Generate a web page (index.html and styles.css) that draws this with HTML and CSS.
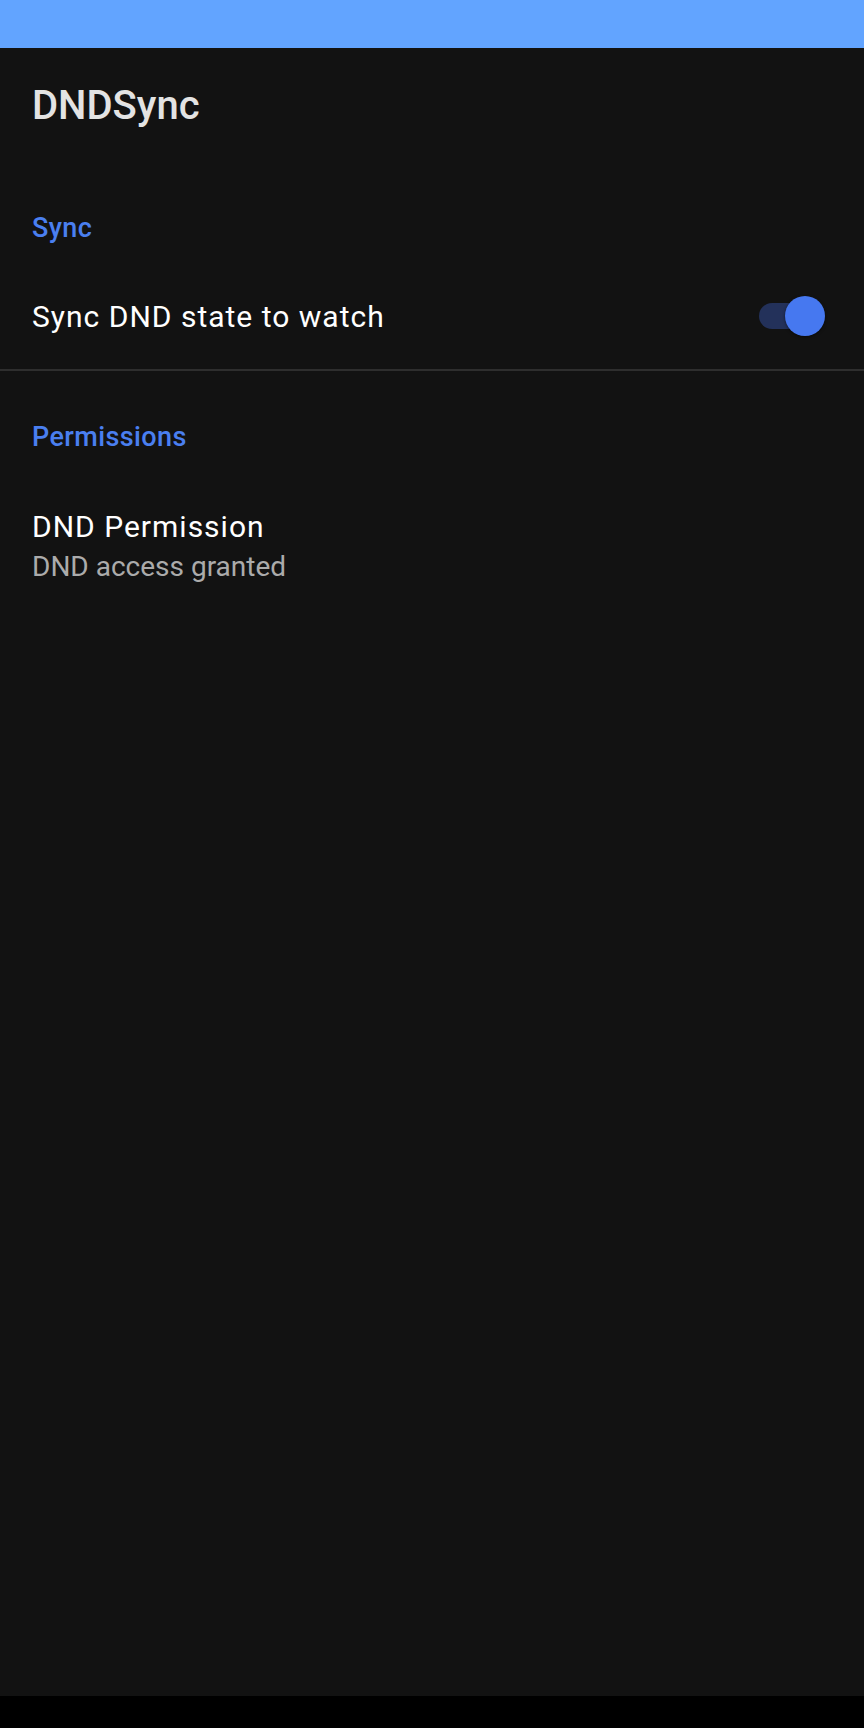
FILE: index.html
```html
<!DOCTYPE html>
<html>
<head>
<meta charset="utf-8">
<link rel="stylesheet" href="styles.css">
</head>
<body>
<div class="screen">
  <div class="statusbar"></div>
  <header class="toolbar">DNDSync</header>
  <main class="content">
    <section class="group">
      <div class="category">Sync</div>
      <div class="pref pref-switch">
        <div class="pref-title">Sync DND state to watch</div>
        <div class="switch on"><span class="track"></span><span class="thumb"></span></div>
      </div>
    </section>
    <div class="divider"></div>
    <section class="group">
      <div class="category category-2">Permissions</div>
      <div class="pref pref-text">
        <div class="pref-title">DND Permission</div>
        <div class="pref-summary">DND access granted</div>
      </div>
    </section>
  </main>
  <div class="navbar"></div>
</div>
</body>
</html>
```

FILE: styles.css
```css
html, body {
  margin: 0;
  padding: 0;
  background: #121212;
}
.screen {
  width: 864px;
  height: 1728px;
  display: flex;
  flex-direction: column;
  font-family: Roboto, "Noto Sans", sans-serif;
  background: #121212;
}
.statusbar {
  height: 48px;
  background: #62a4ff;
  flex: none;
}
.toolbar {
  height: 108px;
  padding-top: 4px;
  line-height: 108px;
  padding-left: 32px;
  font-size: 40px;
  font-weight: 500;
  color: #e3e3e3;
  flex: none;
}
.content {
  flex: 1;
}
.category {
  padding: 48px 32px 0;
  font-size: 27px;
  line-height: 40px;
  font-weight: 500;
  letter-spacing: 0.4px;
  color: #4a7ff0;
}
.category-2 {
  padding-top: 46px;
}
.pref {
  padding: 0 32px;
}
.pref-switch {
  margin-top: 14px;
  height: 107px;
  display: flex;
  align-items: center;
  justify-content: space-between;
}
.pref-switch .pref-title {
  padding-top: 3px;
}
.pref-title {
  font-size: 30px;
  line-height: 40px;
  letter-spacing: 1px;
  color: #ffffff;
}
.pref-text {
  padding-top: 50px;
}
.pref-summary {
  font-size: 28px;
  line-height: 40px;
  color: #ababab;
}
.divider {
  height: 2px;
  background: #2e2e2e;
}
.switch {
  position: relative;
  width: 66px;
  height: 40px;
  margin-right: 7px;
}
.switch .track {
  position: absolute;
  left: 0;
  top: 7px;
  width: 60px;
  height: 26px;
  border-radius: 13px;
  background: #23315a;
}
.switch .thumb {
  position: absolute;
  right: 0;
  top: 0;
  width: 40px;
  height: 40px;
  border-radius: 50%;
  background: #4678f0;
  box-shadow: 0 1px 3px rgba(0,0,0,0.5);
}
.navbar {
  height: 32px;
  background: #000;
  flex: none;
}
```
